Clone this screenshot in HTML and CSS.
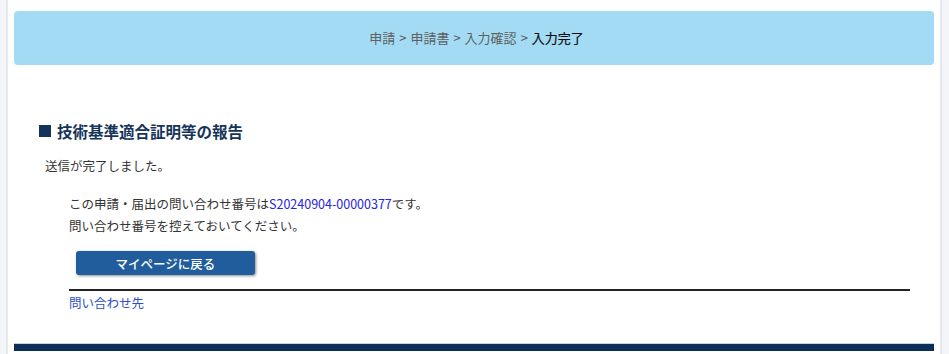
FILE: index.html
```html
<!DOCTYPE html>
<html lang="ja">
<head>
<meta charset="utf-8">
<title>入力完了</title>
<link rel="stylesheet" href="styles.css">
</head>
<body>
<div class="page">
  <div class="breadcrumb">
    <span class="crumb">申請</span><span class="sep">&gt;</span><span class="crumb">申請書</span><span class="sep">&gt;</span><span class="crumb">入力確認</span><span class="sep">&gt;</span><span class="crumb current">入力完了</span>
  </div>
  <main class="content">
    <h2 class="title"><span class="square"></span>技術基準適合証明等の報告</h2>
    <p class="lead">送信が完了しました。</p>
    <div class="detail">
      <p class="line">この申請・届出の問い合わせ番号は<a class="num" href="#">S20240904-00000377</a>です。</p>
      <p class="line">問い合わせ番号を控えておいてください。</p>
      <button class="btn" type="button">マイページに戻る</button>
      <div class="rule"></div>
      <a class="contact" href="#">問い合わせ先</a>
    </div>
  </main>
  <div class="footer-bar"></div>
</div>
</body>
</html>
```
FILE: styles.css
```css
html, body {
  margin: 0;
  padding: 0;
}
body {
  background: #f3f5f8;
  font-family: "Noto Sans CJK JP", "Noto Sans", sans-serif;
  color: #333;
  height: 354px;
  overflow: hidden;
}
.page {
  margin-left: 6px;
  width: 936px;
  min-height: 354px;
  background: #fff;
  border-left: 2px solid #e6e8eb;
  border-right: 2px solid #e6e8eb;
  padding: 11px 6px 0 6px;
  box-sizing: border-box;
}
.breadcrumb {
  height: 54px;
  background: #a3dbf5;
  border-radius: 4px;
  display: flex;
  align-items: center;
  justify-content: center;
  font-size: 13px;
  color: #5f5f5f;
  padding: 0 0 1px 5px;
  box-sizing: border-box;
}
.sep {
  margin: 0 4px;
  color: #555;
}
.current {
  color: #0d0d0d;
  font-weight: 400;
  -webkit-text-stroke: 0.2px #0d0d0d;
}
.content {
  padding: 55px 0 0 25px;
  height: 223px;
}
.title {
  margin: 0;
  font-size: 15.5px;
  line-height: 22px;
  font-weight: 700;
  color: #15345a;
  display: flex;
  align-items: center;
}
.square {
  width: 12px;
  height: 12px;
  background: #15345a;
  margin-right: 6px;
}
.lead {
  margin: 14px 0 0 6px;
  font-size: 12.5px;
  line-height: 20px;
  color: #333;
}
.detail {
  margin: 17px 0 0 30px;
  width: 841px;
}
.line {
  margin: 0;
  font-size: 12.5px;
  line-height: 22px;
  color: #333;
}
.num {
  color: #2424e6;
  text-decoration: none;
}
.btn {
  display: block;
  margin: 14px 0 0 7px;
  width: 179px;
  height: 24px;
  border: none;
  border-radius: 3px;
  background: #215d9c;
  color: #fff;
  font-family: "Noto Sans CJK JP", "Noto Sans", sans-serif;
  font-size: 12.5px;
  font-weight: 500;
  box-shadow: 1px 1px 3px rgba(0, 0, 0, 0.45);
  padding: 0;
}
.rule {
  margin-top: 14px;
  height: 2px;
  background: #222;
}
.contact {
  display: block;
  margin-top: 1px;
  font-size: 12.5px;
  line-height: 22px;
  color: #2c4fc8;
  text-decoration: none;
}
.footer-bar {
  margin-top: 0;
  height: 7px;
  background: #0c2f5a;
  border-top: 1px solid #c9d3df;
}
```
